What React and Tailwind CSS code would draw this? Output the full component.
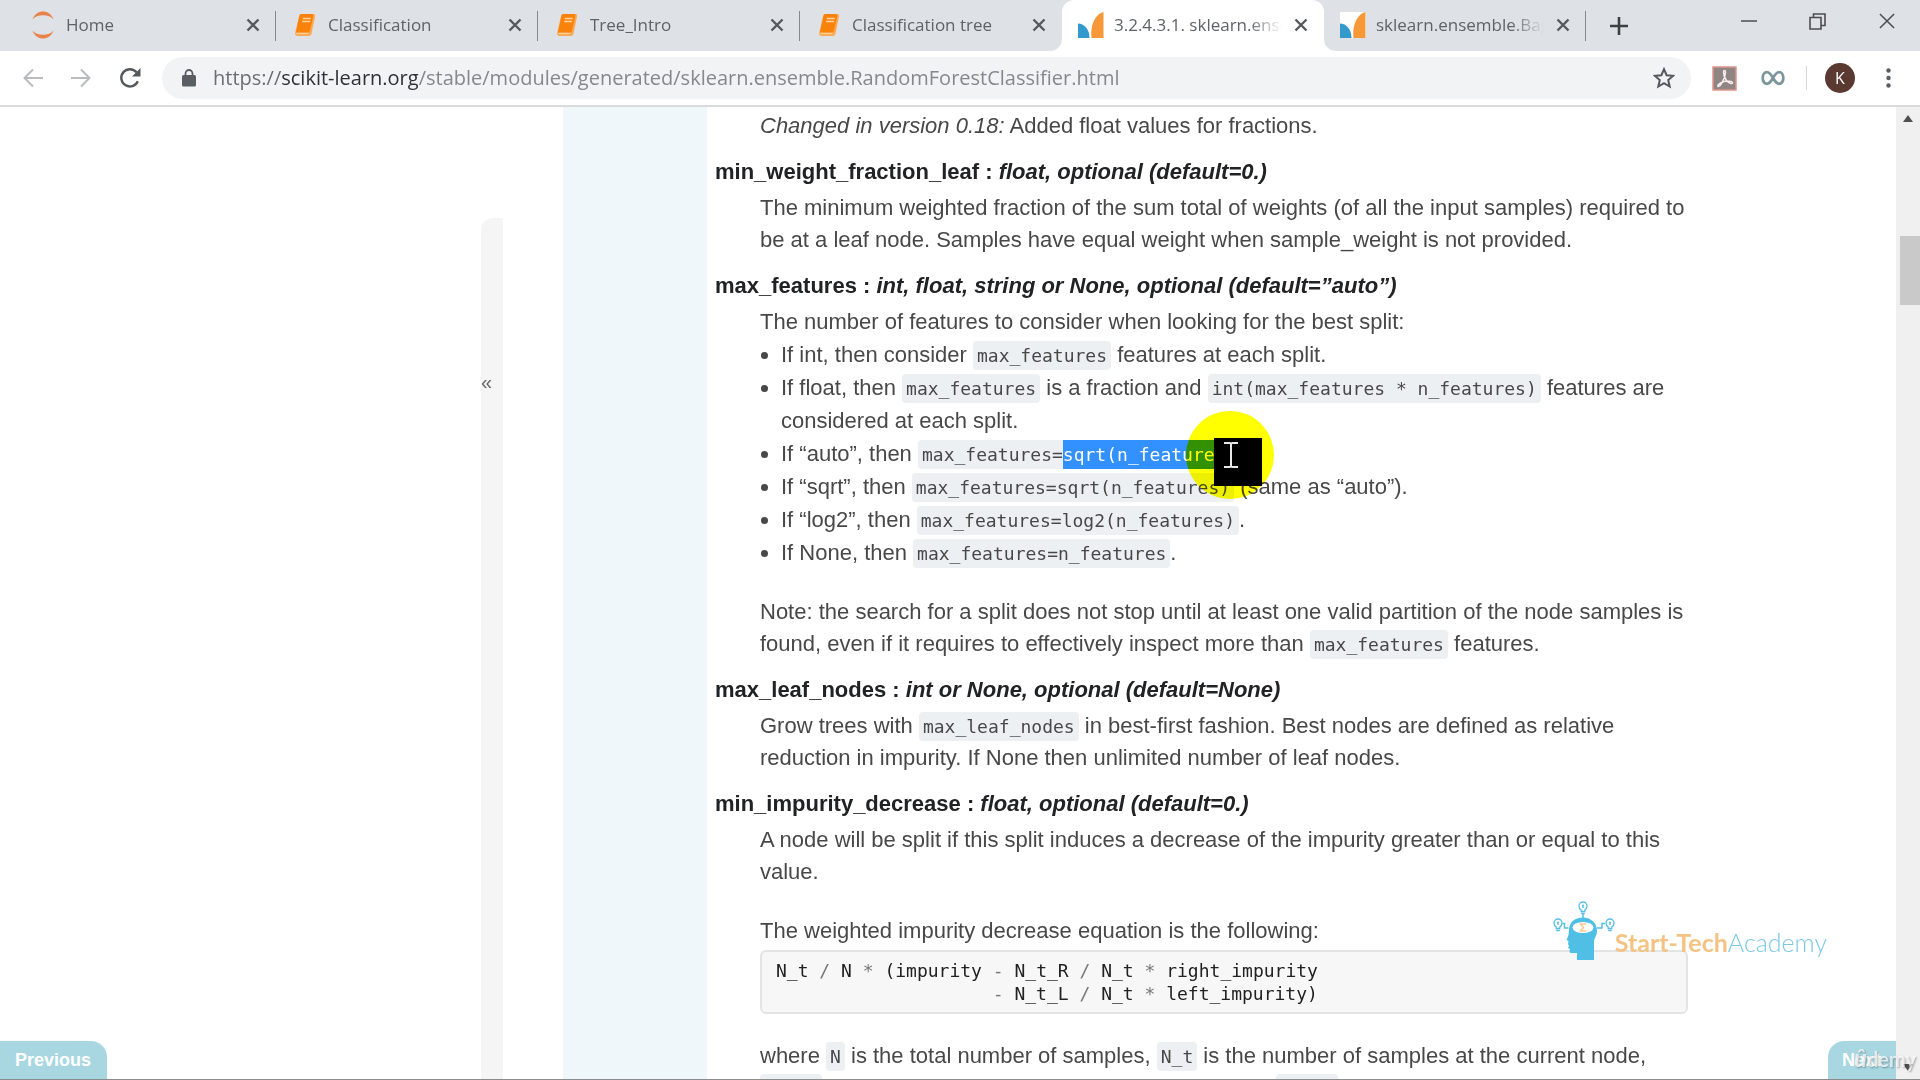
import React from "react";

const sans = "font-['Liberation_Sans',Arial,sans-serif]";
const UI = "font-['Open_Sans','Noto_Sans',sans-serif]";

function JupyterIcon() {
  return (
    <svg viewBox="0 0 24 30" className="h-[30px] w-6" fill="#e8834a">
      <path d="M1.500 9.500C3.500 4 7.500 1.500 12 1.500S20.500 4 22.500 9.500C20 6.500 16.500 5.200 12 5.200S4 6.500 1.500 9.500Z" />
      <path d="M1.500 20.500C3.500 26 7.500 28.500 12 28.500S20.500 26 22.500 20.500C20 23.500 16.500 24.800 12 24.800S4 23.500 1.500 20.500Z" />
    </svg>
  );
}

function BookIcon() {
  return (
    <svg viewBox="0 0 20 24" className="h-6 w-5">
      <path d="M6.500 1H18c1.500 0 2.300 1 2 2.500L16.500 20.500c-.3 1.500-1.200 2.500-2.700 2.500H2.500C.8 23-.3 21.500.2 19.800L4 3C4.300 1.700 5 1 6.500 1Z" fill="#fba850" />
      <path d="M6.500 1H16.500c1.300 0 2 .9 1.700 2.200L15 17.500c-.3 1.200-1 1.800-2.300 1.800H1L4.500 3C4.800 1.700 5.300 1 6.500 1Z" fill="#f9820a" />
      <path d="M1.500 20.600h12" stroke="#fdd3a3" strokeWidth="1" />
      <path d="M7.800 5.500h8M7.100 8.500h8" stroke="#fdd3a3" strokeWidth="1.400" />
    </svg>
  );
}

function SklearnIcon() {
  return (
    <svg viewBox="0 0 26 26" className="h-[26px] w-[26px]">
      <rect width="26" height="26" fill="#fff" />
      <path d="M0 11.500C6 11.500 11.500 17 11.500 26H0Z" fill="#3499cd" />
      <path d="M25.500 0V26H13.500C12 14 17 2 25.500 0Z" fill="#f89939" />
    </svg>
  );
}

const X = ({ size = 14, w = 2.4 }) => (
  <svg viewBox="0 0 14 14" width={size} height={size} stroke="currentColor" strokeWidth={w} fill="none">
    <path d="M1.500 1.500l11 11M12.500 1.500l-11 11" />
  </svg>
);

const tabs = [
  { t: "Home", icon: <JupyterIcon />, sep: true },
  { t: "Classification", icon: <BookIcon />, sep: true },
  { t: "Tree_Intro", icon: <BookIcon />, sep: true },
  { t: "Classification tree", icon: <BookIcon /> },
  { t: "3.2.4.3.1. sklearn.ensemble.RandomForest", icon: <SklearnIcon />, active: true, fade: true },
  { t: "sklearn.ensemble.BaggingClassifier", icon: <SklearnIcon />, sep: true, fade: true },
];

function Tab({ t, icon, sep, active, fade }) {
  return (
    <div className={`relative flex h-[51px] min-w-0 basis-[262px] items-center px-4 pb-[2px] ${active ? "z-10 rounded-t-xl bg-white" : ""}`}>
      {active && (
        <>
          <svg className="absolute bottom-0 -left-3 h-3 w-3" viewBox="0 0 12 12" fill="#fff"><path d="M12 0V12H0A12 12 0 0 0 12 0Z" /></svg>
          <svg className="absolute bottom-0 -right-3 h-3 w-3" viewBox="0 0 12 12" fill="#fff"><path d="M0 0V12H12A12 12 0 0 1 0 0Z" /></svg>
        </>
      )}
      <span className="flex w-[26px] shrink-0 justify-center">{icon}</span>
      <span className={`ml-[10px] min-w-0 flex-1 overflow-hidden whitespace-nowrap text-[17px] text-[#5f6368] ${fade ? "[mask-image:linear-gradient(to_right,#000_80%,transparent)]" : ""}`}>{t}</span>
      <button aria-label={`Close ${t}`} className="ml-3 text-[#55595d]"><X /></button>
      {sep && <span className="absolute right-0 top-[11px] h-[30px] w-px bg-[#85888c]" />}
    </div>
  );
}

function TabBar() {
  return (
    <div className="flex h-[51px] shrink-0 bg-[#dee1e6] pl-[14px]">
      <div className="flex min-w-0 basis-[1572px]">{tabs.map((x) => <Tab key={x.t} {...x} />)}</div>
      <button aria-label="New tab" className="ml-6 text-[#3c4043]">
        <svg width="18" height="18" viewBox="0 0 18 18" stroke="currentColor" strokeWidth="2.600"><path d="M9 0v18M0 9h18" /></svg>
      </button>
      <div className="ml-auto flex h-[42px] items-center gap-[52px] pr-6 text-[#4b4e52]">
        <button aria-label="Minimize"><svg width="16" height="16" viewBox="0 0 16 16" stroke="currentColor" strokeWidth="1.500"><path d="M0 8h16" /></svg></button>
        <button aria-label="Restore">
          <svg width="17" height="17" viewBox="0 0 17 17" fill="none" stroke="currentColor" strokeWidth="1.600"><path d="M1 4.500h11V16H1ZM4.500 4V1H16v11.500h-3.500" /></svg>
        </button>
        <button aria-label="Close window"><X size={18} w={1.2} /></button>
      </div>
    </div>
  );
}

function Toolbar() {
  return (
    <div className="flex h-14 shrink-0 items-center border-b-2 border-[#d9dadb] bg-white pl-[23px] pr-[29px]">
      <div className="flex w-[139px] shrink-0 gap-7">
        <button aria-label="Back" className="text-[#b9bbbe]"><svg width="20" height="20" viewBox="0 0 20 20" fill="none" stroke="currentColor" strokeWidth="2"><path d="M20 10H2M10 1.500 1.500 10l8.500 8.500" /></svg></button>
        <button aria-label="Forward" className="text-[#b9bbbe]"><svg width="20" height="20" viewBox="0 0 20 20" fill="none" stroke="currentColor" strokeWidth="2"><path d="M0 10h18M10 1.500 18.500 10 10 18.500" /></svg></button>
        <button aria-label="Reload" className="text-[#55595d]"><svg width="22" height="22" viewBox="0 0 22 22" fill="none" stroke="currentColor" strokeWidth="2.400"><path d="M18.800 14.200A8.600 8.600 0 1 1 17.500 5.300" /><path d="M21.500 1v8.500H13Z" fill="currentColor" stroke="none" /></svg></button>
      </div>
      <div className="flex h-[42px] min-w-0 flex-1 items-center rounded-full bg-[#f1f3f4] pl-5 pr-4">
        <svg width="14" height="18" viewBox="0 0 14 18" className="shrink-0" fill="#5a5e62"><rect y="6" width="14" height="11.500" rx="1.500" /><path d="M3.500 7V4.500a3.500 3.500 0 0 1 7 0V7" fill="none" stroke="#5a5e62" strokeWidth="1.800" /></svg>
        <div className="ml-[17px] flex-1 whitespace-nowrap text-xl text-[#85898d]">
          <span className="text-[#6b6f73]">https://</span><span className="text-[#2f3235]">scikit-learn.org</span>/stable/modules/generated/sklearn.ensemble.RandomForestClassifier.html
        </div>
        <button aria-label="Bookmark" className="text-[#55595d]"><svg width="22" height="22" viewBox="0 0 22 22" fill="none" stroke="currentColor" strokeWidth="2"><path d="M11 2.200l2.600 6 6.500.6-4.900 4.300 1.500 6.400L11 16.100l-5.700 3.400 1.500-6.400L1.900 8.800l6.500-.6Z" /></svg></button>
      </div>
      <button aria-label="PDF" className="ml-[21px]">
        <svg width="25" height="25" viewBox="0 0 25 25"><rect x="1" y="1" width="23" height="23" fill="#8f8583" stroke="#e0958a" strokeWidth="1.500" /><path d="M6 20.500C5 18.500 11 15 15 15c3 0 5.500.5 5.500 1.800S17 17.500 14.500 14.500C12.500 12 11.500 8 11.500 6s2-2 2 0C13.500 9 9.500 21 6 20.500Z" fill="none" stroke="#f6efee" strokeWidth="1.500" /></svg>
      </button>
      <button aria-label="Extension" className="ml-6">
        <svg width="24" height="16" viewBox="0 0 24 16" fill="none" stroke="#7b969c" strokeWidth="2.800"><path d="M12 8C9.800 4.200 8.300 2.200 6 2.200 3.500 2.200 1.700 4.800 1.700 8S3.500 13.800 6 13.800C8.300 13.800 9.800 11.800 12 8S15.700 2.200 18 2.200C20.500 2.200 22.300 4.800 22.300 8S20.500 13.800 18 13.800C15.700 13.800 14.200 11.800 12 8Z" /></svg>
      </button>
      <span className="ml-[21px] h-6 w-px bg-[#d5d7d9]" />
      <button aria-label="Profile" className="ml-[18px] flex h-[30px] w-[30px] items-center justify-center rounded-full bg-[#5a3a30] text-base text-white">K</button>
      <button aria-label="Menu" className="ml-[31px]"><svg width="5" height="20" viewBox="0 0 5 20" fill="#5a5e62"><circle cx="2.500" cy="2.500" r="2.200" /><circle cx="2.500" cy="10" r="2.200" /><circle cx="2.500" cy="17.500" r="2.200" /></svg></button>
    </div>
  );
}

const C = ({ children }) => (
  <code className="rounded bg-[#ecf0f3] px-1 py-1 font-['DejaVu_Sans_Mono',monospace] text-lg leading-5 text-[#484848]">{children}</code>
);

const Term = ({ name, type }) => (
  <dt className="mb-1 font-bold text-[#212224]">{name} : <em>{type}</em></dt>
);

const Dd = ({ children }) => <dd className="mb-[14px] ml-[45px]">{children}</dd>;

function Cursor() {
  return (
    <span className="absolute -top-[50px] -left-[29px] h-[88px] w-[88px]">
      <span className="absolute inset-0 rounded-full bg-[#ffff00] mix-blend-multiply" />
      <svg className="absolute left-[28px] top-[27px]" width="48" height="48" viewBox="0 0 48 48">
        <rect width="48" height="48" fill="#000" />
        <path d="M10 5h5.500q1.500 0 1.500 1.500Q17 5 18.500 5H24M17 6v22M10 29h5.500q1.500 0 1.500-1.500Q17 29 18.500 29H24" fill="none" stroke="#e8e8e8" strokeWidth="2" />
      </svg>
    </span>
  );
}

function Doc() {
  return (
    <main className="min-w-0 flex-1 overflow-hidden pl-2 pr-[208px] text-[22px] leading-8 text-[#484848]">
      <dl className="pt-[3px]">
        <Dd><em>Changed in version 0.18:</em> Added float values for fractions.</Dd>
        <Term name="min_weight_fraction_leaf" type="float, optional (default=0.)" />
        <Dd>The minimum weighted fraction of the sum total of weights (of all the input samples) required to be at a leaf node. Samples have equal weight when sample_weight is not provided.</Dd>
        <Term name="max_features" type="int, float, string or None, optional (default=”auto”)" />
        <Dd>
          <p>The number of features to consider when looking for the best split:</p>
          <ul className="mb-[27px] list-disc pl-[21px] leading-[33px]">
            <li>If int, then consider <C>max_features</C> features at each split.</li>
            <li>If float, then <C>max_features</C> is a fraction and <C>int(max_features * n_features)</C> features are considered at each split.</li>
            <li>If “auto”, then <C>max_features=<span className="bg-[#3390ff] py-1 text-white">sqrt(n_feature</span><span className="relative inline-block"><Cursor /></span></C></li>
            <li>If “sqrt”, then <C>max_features=sqrt(n_features)</C> (same as “auto”).</li>
            <li>If “log2”, then <C>max_features=log2(n_features)</C>.</li>
            <li>If None, then <C>max_features=n_features</C>.</li>
          </ul>
          <p>Note: the search for a split does not stop until at least one valid partition of the node samples is found, even if it requires to effectively inspect more than <C>max_features</C> features.</p>
        </Dd>
        <Term name="max_leaf_nodes" type="int or None, optional (default=None)" />
        <Dd>Grow trees with <C>max_leaf_nodes</C> in best-first fashion. Best nodes are defined as relative reduction in impurity. If None then unlimited number of leaf nodes.</Dd>
        <Term name="min_impurity_decrease" type="float, optional (default=0.)" />
        <Dd>
          <p className="mb-[27px]">A node will be split if this split induces a decrease of the impurity greater than or equal to this value.</p>
          <p>The weighted impurity decrease equation is the following:</p>
          <pre className="mt-[3px] mb-[26px] rounded-md border-2 border-[#e3e4e5] bg-[#f7f7f7] px-[14px] py-[7px] font-['DejaVu_Sans_Mono',monospace] text-lg leading-[23px] text-[#222]">
            N_t <Op>/</Op> N <Op>*</Op> (impurity <Op>-</Op> N_t_R <Op>/</Op> N_t <Op>*</Op> right_impurity{"\n" + " ".repeat(20)}
            <Op>-</Op> N_t_L <Op>/</Op> N_t <Op>*</Op> left_impurity)
          </pre>
          <p>where <C>N</C> is the total number of samples, <C>N_t</C> is the number of samples at the current node, <C>N_t_L</C> is the number of samples in the left child, and <C>N_t_R</C> is the number of samples in the right child.</p>
        </Dd>
      </dl>
    </main>
  );
}

function Op({ children }) {
  return <span className="text-[#777]">{children}</span>;
}

function Bulb({ x, y }) {
  return (
    <g transform={`translate(${x} ${y})`} fill="none" stroke="#56bfe4" strokeWidth="1.300">
      <path d="M-1.800 5.500V4C-3.300 3-4 1.700-4 0a4 4 0 0 1 8 0C4 1.700 3.300 3 1.800 4v1.500ZM-1.800 7.500h3.600M-1 -.5h2M0 0v2" />
    </g>
  );
}

function Watermark() {
  return (
    <div className="absolute bottom-[118px] right-[93px] flex items-end">
      <svg width="62" height="60" viewBox="0 0 62 60">
        <path d="M16 28C17 20 23 16.500 30 16.500S44 21 44 30c0 5-3 7-3 11v18H24V52h-6c-1.800 0-1.500-2-1-4l-2-1 1-2-1-2 .5-3-2-1 2-5Z" fill="#4fbfe6" />
        <ellipse cx="30" cy="26.500" rx="10.500" ry="5.500" fill="#fff" />
        <path d="M33 23h-5.500l3 3.500-3 3.500H33" fill="none" stroke="#f6c98d" strokeWidth="1.500" />
        <path d="M30 12.500V17M15.500 27h-4v-4.500H9.500M44 27h5v-4.500h3" fill="none" stroke="#56bfe4" strokeWidth="1.500" />
        <Bulb x={30} y={5} /><Bulb x={5} y={22} /><Bulb x={57} y={22} />
      </svg>
      <span className="mb-[3px] font-['Lato',sans-serif] text-[25px] leading-8 whitespace-nowrap"><span className="font-bold text-[#f4c383]">Start-Tech</span><span className="font-light text-[#7cc8e4]">Academy</span></span>
    </div>
  );
}

export default function App() {
  return (
    <div className={`flex h-screen flex-col overflow-hidden bg-white ${UI}`}>
      <TabBar />
      <Toolbar />
      <div className={`relative flex min-h-0 flex-1 border-b border-[#8b8c8e] ${sans}`}>
        <div className="flex w-[563px] shrink-0 justify-end pr-[60px] pt-[111px]">
          <button aria-label="Collapse sidebar" className="flex w-[22px] items-start rounded-tl-xl bg-[#f5f5f5] pt-[152px] text-xl leading-6 text-[#666]">«</button>
        </div>
        <div className="w-36 shrink-0 bg-[#eff7fa]" />
        <Doc />
        <div className="flex w-6 shrink-0 flex-col items-center bg-[#f0f0f0] py-2">
          <svg width="10" height="7" viewBox="0 0 10 7" fill="#505050"><path d="M5 0l5 7H0Z" /></svg>
          <div className="mt-[114px] h-[69px] w-5 self-end bg-[#c9c9c9]" />
          <svg className="mt-auto" width="10" height="7" viewBox="0 0 10 7" fill="#505050"><path d="M5 7l5-7H0Z" /></svg>
        </div>
        <a href="#previous" className="absolute bottom-0 left-0 rounded-tr-2xl bg-[#a8d7e2] py-2 pl-[15px] pr-4 text-lg leading-[22px] font-bold text-white">Previous</a>
        <a href="#next" className="absolute bottom-0 right-6 rounded-tl-2xl bg-[#a8d7e2] py-2 pl-[14px] pr-[15px] text-lg leading-[22px] font-bold text-white">Next</a>
        <span className="absolute bottom-1 right-1 font-['Lato',sans-serif] text-xl leading-8 font-bold text-white/70 [text-shadow:1px_1px_2px_rgba(0,0,0,0.3)]"><span className="text-2xl italic">û</span>demy</span>
        <Watermark />
      </div>
    </div>
  );
}
